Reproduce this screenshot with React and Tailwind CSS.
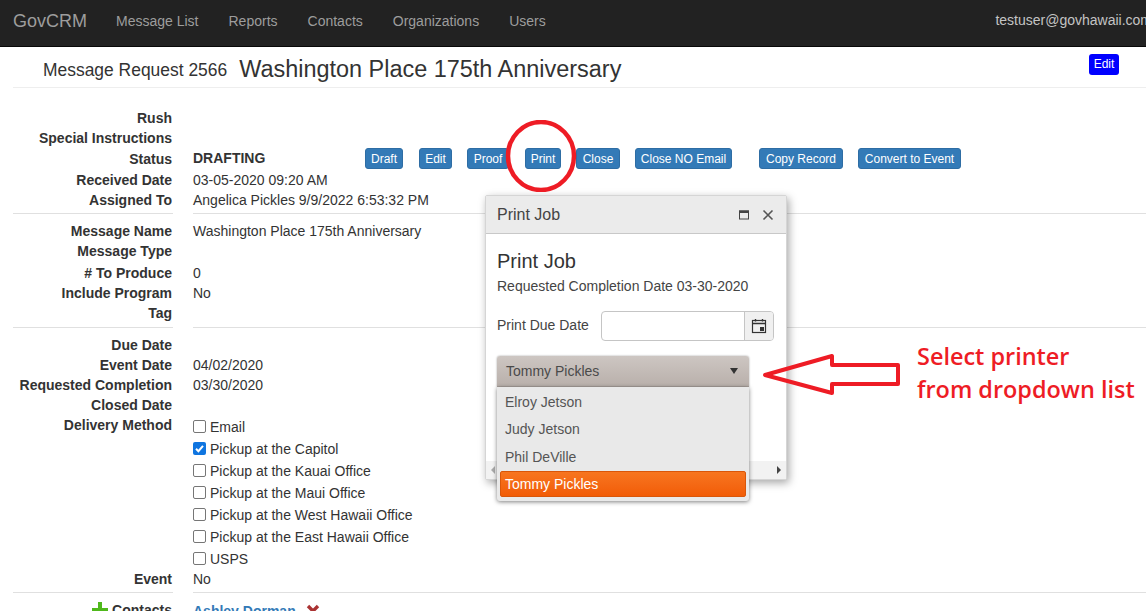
import React from 'react';

const FONT = "font-['Liberation_Sans',Arial,sans-serif]";

const NAV_ITEMS = [
  ['Message List', 'ml-[29px]'],
  ['Reports', 'ml-[30px]'],
  ['Contacts', 'ml-[30px]'],
  ['Organizations', 'ml-[30px]'],
  ['Users', 'ml-[30px]'],
];

const STATUS_BUTTONS = [
  ['Draft', 'w-[38px] ml-0'],
  ['Edit', 'w-[33px] ml-[16px]'],
  ['Proof', 'w-[42px] ml-[15px]'],
  ['Print', 'w-[36px] ml-[16px]'],
  ['Close', 'w-[44px] ml-[15px]'],
  ['Close NO Email', 'w-[97px] ml-[15px]'],
  ['Copy Record', 'w-[84px] ml-[27px]'],
  ['Convert to Event', 'w-[103px] ml-[15px]'],
];

const DELIVERY = [
  ['Email', false],
  ['Pickup at the Capitol', true],
  ['Pickup at the Kauai Office', false],
  ['Pickup at the Maui Office', false],
  ['Pickup at the West Hawaii Office', false],
  ['Pickup at the East Hawaii Office', false],
  ['USPS', false],
];

function Row({ label, height, children }) {
  return (
    <div className="flex items-center" style={{ height }}>
      <div className="w-[160px] pr-[1px] text-right font-bold">{label}</div>
      <div className="ml-[20px] flex-1 flex items-center">{children}</div>
    </div>
  );
}

function Divider() {
  return (
    <div className="flex">
      <div className="w-[160px] h-px bg-[#e0e0e0]" />
      <div className="ml-[20px] flex-1 h-px bg-[#e0e0e0]" />
    </div>
  );
}

function Check({ label, checked }) {
  return (
    <div className="flex items-center h-[22px]">
      {checked ? (
        <span className="w-[13px] h-[13px] rounded-[2px] bg-[#0f75e0] flex items-center justify-center -mt-[2px]">
          <svg width="11" height="11" viewBox="0 0 11 11" fill="none">
            <path d="M2 5.8 L4.4 8.2 L9 2.8" stroke="#fff" strokeWidth="2" />
          </svg>
        </span>
      ) : (
        <span className="w-[13px] h-[13px] rounded-[2px] border border-[#767676] bg-white -mt-[2px]" />
      )}
      <span className="ml-[4px]">{label}</span>
    </div>
  );
}

function PrintWindow() {
  return (
    <div className="absolute left-[485px] top-[195px] w-[302px] h-[285px] bg-white border border-[#d5d5d5] rounded-[2px] shadow-[2px_3px_8px_rgba(0,0,0,0.35)] text-[#444]">
      <div className="h-[38px] bg-[#ebebeb] border-b border-[#c8c8c8] flex items-center pl-[11px] pr-[12px]">
        <span className="text-[16px] flex-1">Print Job</span>
        <svg width="12" height="12" viewBox="0 0 12 12" fill="none" className="mr-[12px]">
          <rect x="1.5" y="2" width="9" height="8" stroke="#444" strokeWidth="1" />
          <rect x="1" y="1.5" width="10" height="2.5" fill="#444" />
        </svg>
        <svg width="12" height="12" viewBox="0 0 12 12" fill="none">
          <path d="M1.5 1.5 L10.5 10.5 M10.5 1.5 L1.5 10.5" stroke="#555" strokeWidth="1.6" />
        </svg>
      </div>
      <div className="pl-[11px] pr-[12px]">
        <div className="text-[20px] leading-[24px] mt-[15px] text-[#333]">Print Job</div>
        <div className="text-[14px] leading-[20px] mt-[3px]">Requested Completion Date 03-30-2020</div>
        <div className="flex items-center mt-[15px]">
          <span className="w-[104px] -mt-[3px]">Print Due Date</span>
          <div className="w-[173px] h-[30px] border border-[#c5c5c5] rounded-[4px] flex bg-white overflow-hidden">
            <div className="flex-1" />
            <div className="w-[29px] bg-[#f0f0f0] border-l border-[#c5c5c5] flex items-center justify-center">
              <svg width="16" height="16" viewBox="0 0 16 16" fill="none">
                <rect x="1.5" y="2.5" width="13" height="12" stroke="#333" strokeWidth="1.2" />
                <path d="M1.5 5.5 H14.5" stroke="#333" strokeWidth="1.4" />
                <path d="M4.5 1 V3.5 M11.5 1 V3.5" stroke="#333" strokeWidth="1.4" />
                <rect x="9" y="9" width="4" height="4" fill="#333" />
              </svg>
            </div>
          </div>
        </div>
      </div>
      <div className="absolute left-0 right-0 bottom-0 h-[18px] bg-[#f2f2f2] flex items-center justify-between px-[5px]">
        <span className="w-0 h-0 border-y-[4px] border-y-transparent border-r-[4px] border-r-[#aaa]" />
        <span className="w-0 h-0 border-y-[4px] border-y-transparent border-l-[4px] border-l-[#444]" />
      </div>
    </div>
  );
}

function PrinterDropdown() {
  return (
    <div className="absolute left-[497px] top-[356px] w-[252px] text-[#555]">
      <div className="h-[31px] rounded-t-[3px] bg-gradient-to-b from-[#cdc6c2] to-[#b9b0ab] border-b border-[#a9a19c] flex items-center pl-[9px] pr-[11px] shadow-[0_0_2px_rgba(0,0,0,0.4)]">
        <span className="flex-1 text-[#4a4a4a]">Tommy Pickles</span>
        <span className="w-0 h-0 border-x-[4px] border-x-transparent border-t-[6px] border-t-[#333]" />
      </div>
      <div className="bg-[#e9e9e9] h-[114px] pt-[1px] rounded-b-[3px] shadow-[0_1px_4px_rgba(0,0,0,0.5)] relative">
        <div className="h-[27px] flex items-center pl-[8px]">Elroy Jetson</div>
        <div className="h-[27px] flex items-center pl-[8px]">Judy Jetson</div>
        <div className="h-[29px] flex items-center pl-[8px]">Phil DeVille</div>
        <div className="mx-[3px] h-[26px] rounded-[2px] bg-gradient-to-b from-[#f7751f] to-[#f25c05] border border-[#d9560a] flex items-center pl-[4px] text-white">
          Tommy Pickles
        </div>
      </div>
    </div>
  );
}

export default function App() {
  return (
    <div className={`${FONT} relative w-[1146px] h-[611px] overflow-hidden bg-white text-[14px] leading-[20px] text-[#333]`}>
      <nav className="h-[47px] bg-[#222] border-b border-[#080808] flex items-center pl-[13px] pr-[1px] pb-[4px] text-[#9d9d9d]">
        <span className="text-[18px]">GovCRM</span>
        {NAV_ITEMS.map(([name, cls]) => (
          <span key={name} className={cls}>{name}</span>
        ))}
        <span className="ml-auto -mr-[7px] text-[#c4c4c4] -mt-[2px]">testuser@govhawaii.com</span>
      </nav>

      <div className="pl-[13px]">
        <div className="h-[41px] border-b border-[#eee] flex items-center pl-[30px] relative">
          <span className="text-[17.45px] mt-[6px]">Message Request 2566</span>
          <span className="text-[23.45px] ml-[12px] mt-[4px]">Washington Place 175th Anniversary</span>
          <button className="ml-auto mr-[27px] -mt-[6px] w-[30px] h-[21px] bg-[#0000ff] rounded-[3px] text-white text-[12px]">
            Edit
          </button>
        </div>

        <div className="h-[20px]" />
        <Row label="Rush" height={20} />
        <Row label="Special Instructions" height={20} />
        <Row label="Status" height={21}>
          <span className="w-[172px] font-bold -mt-[2px]">DRAFTING</span>
          {STATUS_BUTTONS.map(([name, cls]) => (
            <button
              key={name}
              className={`${cls} h-[21px] bg-[#337ab7] border border-[#2e6da4] rounded-[3px] text-white text-[12px] leading-none whitespace-nowrap`}
            >
              {name}
            </button>
          ))}
        </Row>
        <Row label="Received Date" height={21}>03-05-2020 09:20 AM</Row>
        <Row label="Assigned To" height={20}>Angelica Pickles 9/9/2022 6:53:32 PM</Row>
        <div className="h-[3px]" />
        <Divider />
        <div className="h-[7px]" />
        <Row label="Message Name" height={20}>Washington Place 175th Anniversary</Row>
        <Row label="Message Type" height={20} />
        <div className="h-[1px]" />
        <Row label="# To Produce" height={21}>0</Row>
        <Row label="Include Program" height={20}>No</Row>
        <Row label="Tag" height={20} />
        <div className="h-[4px]" />
        <Divider />
        <div className="h-[7px]" />
        <Row label="Due Date" height={20} />
        <Row label="Event Date" height={20}>04/02/2020</Row>
        <Row label="Requested Completion" height={20}>03/30/2020</Row>
        <Row label="Closed Date" height={20} />
        <div className="flex">
          <div className="w-[160px] pr-[1px] text-right font-bold h-[20px]">Delivery Method</div>
          <div className="ml-[20px] mt-[1px] flex flex-col -mb-[1px]">
            {DELIVERY.map(([name, checked]) => (
              <Check key={name} label={name} checked={checked} />
            ))}
          </div>
        </div>
        <Row label="Event" height={19}>No</Row>
        <div className="h-[4px]" />
        <Divider />
        <div className="h-[8px]" />
        <Row label={
          <span className="inline-flex items-center justify-end">
            <svg width="16" height="16" viewBox="0 0 16 16" className="mr-[4px]">
              <path d="M6 0 H10 V6 H16 V10 H10 V16 H6 V10 H0 V6 H6 Z" fill="#4fb81c" />
            </svg>
            Contacts
          </span>
        } height={20}>
          <span className="text-[#337ab7] font-bold">Ashley Dorman</span>
          <svg width="14" height="14" viewBox="0 0 14 14" className="ml-[10px]">
            <path d="M2 2 L12 12 M12 2 L2 12" stroke="#a33" strokeWidth="3.4" />
          </svg>
        </Row>
      </div>

      <PrintWindow />
      <PrinterDropdown />

      {/* red annotations pasted over the screenshot */}
      <svg className="absolute left-[505px] top-[120px]" width="72" height="72" viewBox="0 0 72 72" fill="none">
        <ellipse cx="36" cy="36" rx="33" ry="34" stroke="#ee1c25" strokeWidth="4.5" />
      </svg>
      <svg className="absolute left-[762px] top-[352px]" width="140" height="46" viewBox="0 0 140 46" fill="none">
        <path d="M3 23 L70 4 V13 H136 V32 H70 V41 Z" stroke="#ee1c25" strokeWidth="4" strokeLinejoin="round" />
      </svg>
      <div className="absolute left-[917px] top-[340px] font-['Open_Sans',sans-serif] font-semibold text-[23.45px] leading-[33px] text-[#ee1c25] whitespace-nowrap">
        Select printer
        <br />
        from dropdown list
      </div>
    </div>
  );
}
